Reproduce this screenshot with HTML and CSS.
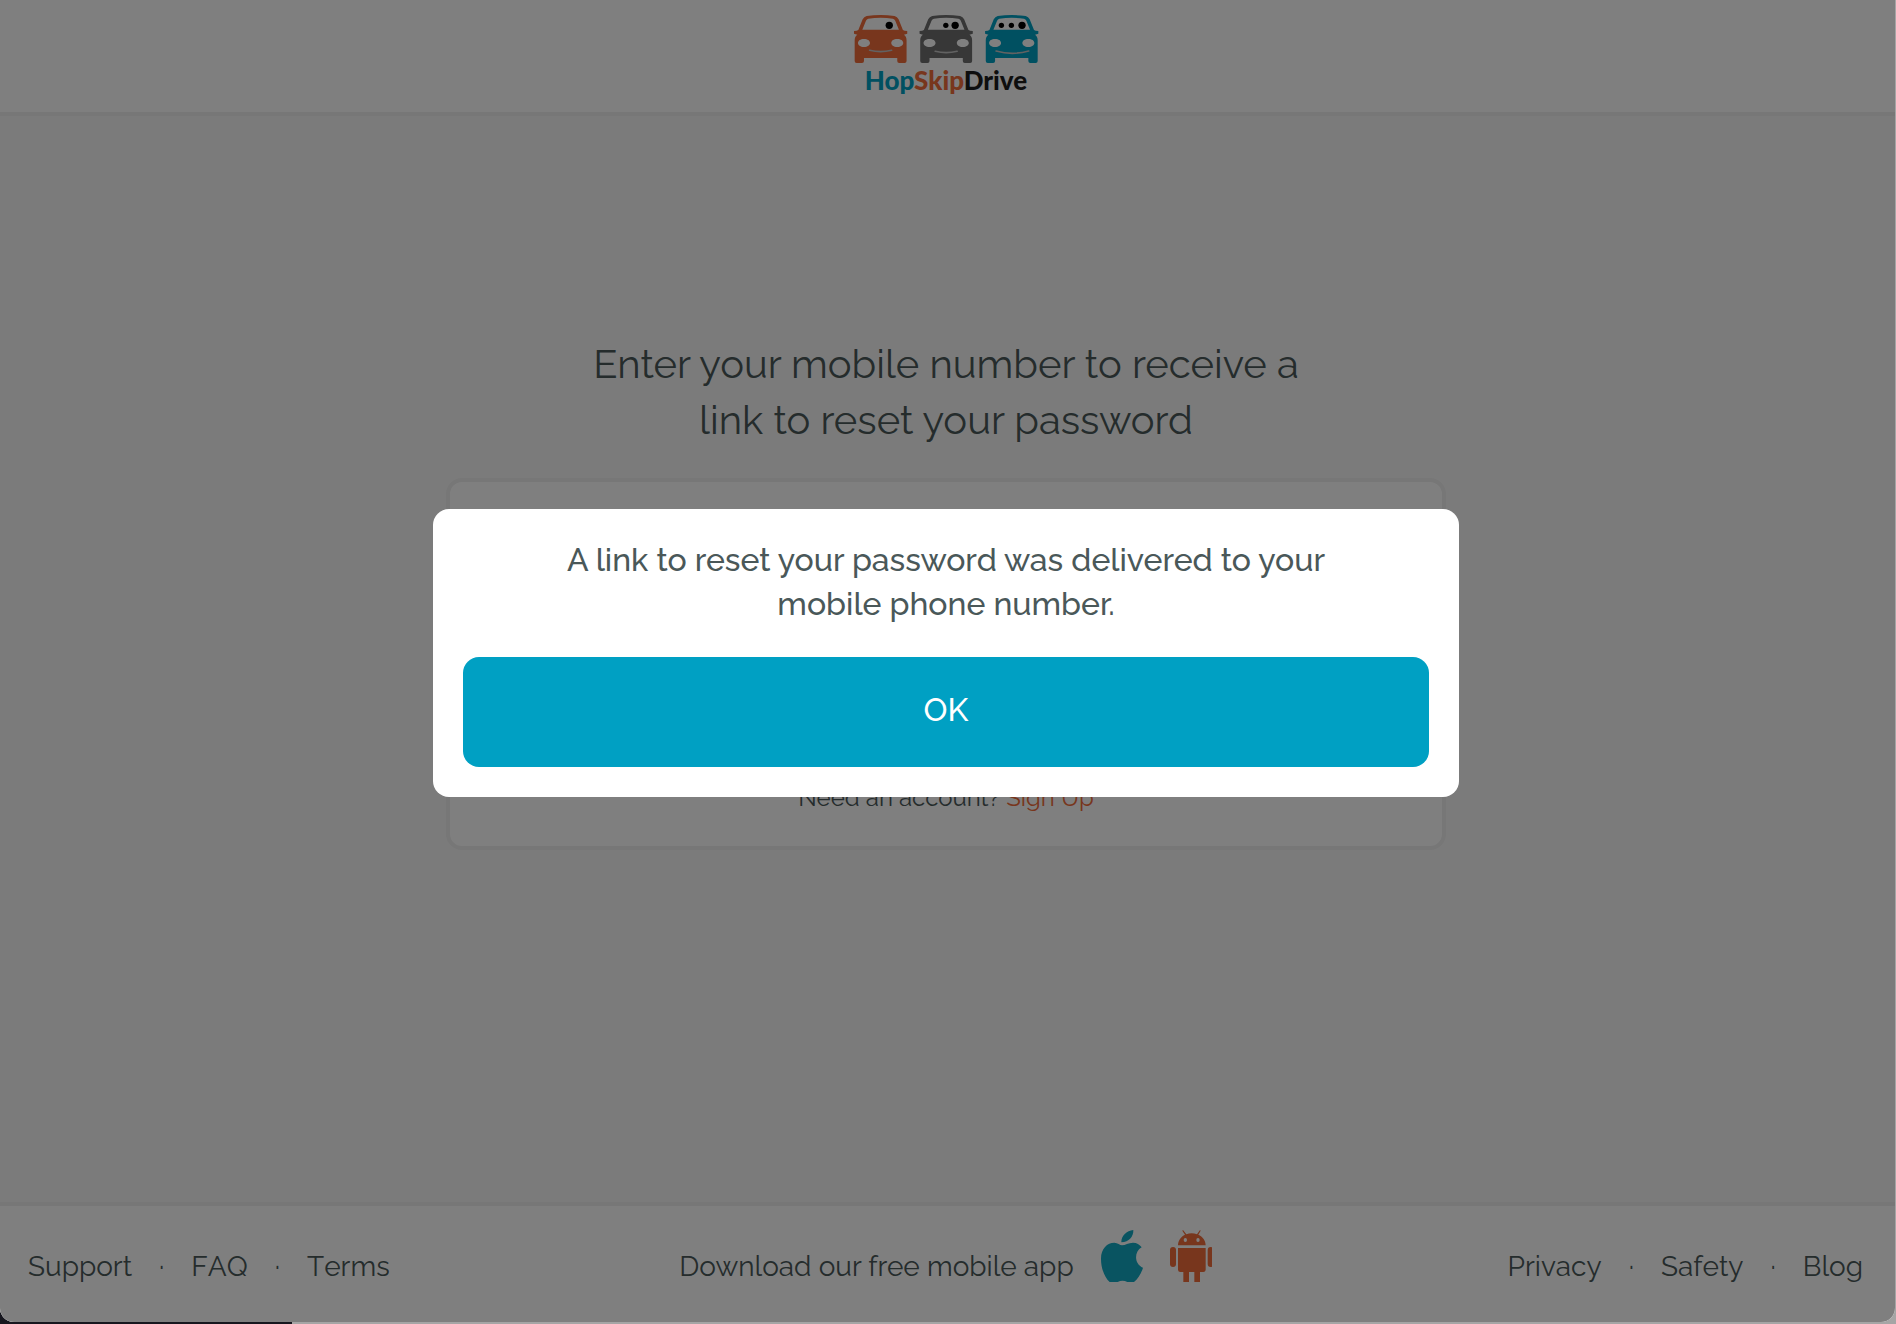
FILE: index.html
```html
<!DOCTYPE html>
<html lang="en">
<head>
	<meta charset="UTF-8">
	<title>HopSkipDrive</title>
	<link rel="stylesheet" href="styles.css">
</head>
<body>
	<div class="page">
		<header class="header">
			<a class="logo" href="#">
				<svg class="logo-cars" viewBox="0 0 556 144" aria-hidden="true">
					<defs>
						<g id="car">
							<path fill-rule="evenodd" d="M38 3Q80 -3 122 3Q130 5 134 13L147 45L152 47L160 48L160 56L150 59Q158 64 158 76V138Q158 144 152 144H136Q130 144 130 138V129H30V138Q30 144 24 144H8Q2 144 2 138V76Q2 64 10 59L0 56V48L8 47L13 45L26 13Q30 5 38 3ZM43 11Q38 12 36 17L25 44H135L124 17Q122 12 117 11Q80 6 43 11ZM30 72C19 72 12 77 12 84S19 96 30 96S48 91 48 84S41 72 30 72ZM130 72C119 72 112 77 112 84S119 96 130 96S148 91 148 84S141 72 130 72Z"/>
						</g>
					</defs>
					<g class="orange">
						<use href="#car"/>
						<path class="smile" d="M47 106Q80 114 113 106"/>
						<circle class="eye" cx="106" cy="31" r="11"/>
					</g>
					<g class="gray" transform="translate(197 0)">
						<use href="#car"/>
						<path class="smile" d="M47 109Q80 117 113 109"/>
						<circle class="eye" cx="79" cy="31" r="8"/>
						<circle class="eye" cx="107" cy="31" r="11"/>
					</g>
					<g class="blue" transform="translate(394 0)">
						<use href="#car"/>
						<path class="smile" d="M33 108Q82 122 131 108"/>
						<circle class="eye" cx="49" cy="31" r="8"/>
						<circle class="eye" cx="79" cy="31" r="8"/>
						<circle class="eye" cx="111" cy="31" r="11"/>
					</g>
				</svg>
				<span class="logo-name"><span class="hop">Hop</span><span class="skip">Skip</span>Drive</span>
			</a>
		</header>

		<main class="main">
			<h1 class="title">Enter your mobile number to receive a link to reset your password</h1>
			<div class="card">
				<p class="signup">Need an account? <a href="#">Sign Up</a></p>
			</div>
		</main>

		<footer class="footer">
			<nav class="footer-nav">
				<a href="#">Support</a><span>·</span><a href="#">FAQ</a><span>·</span><a href="#">Terms</a>
			</nav>
			<div class="footer-apps">
				<span>Download our free mobile app</span>
				<a class="app-icon" href="#" aria-label="iOS app">
					<svg class="apple" viewBox="0 0 126 156">
						<path d="M97 0C98 19 84 37 61 37C60 18 77 2 97 0Z"/>
						<path d="M63 46C73 46 82 38 96 38C107 38 116 43 122 52C99 65 99 101 126 113C121 130 111 147 99 156H79C69 151 60 151 50 156H26C10 142 0 114 0 86C0 55 19 38 40 38C50 38 57 46 63 46Z"/>
					</svg>
				</a>
				<a class="app-icon" href="#" aria-label="Android app">
					<svg class="orange" viewBox="0 0 126 156">
						<path fill-rule="evenodd" d="M24 46C24 32 33 20 45 14L37 2L39 0L49 13Q65 7 81 13L90 0L92 2L85 14C98 20 107 32 107 46ZM46 24A5 6 0 1 0 46 36A5 6 0 1 0 46 24ZM84 24A5 6 0 1 0 84 36A5 6 0 1 0 84 24Z"/>
						<path d="M24 54H107V119Q107 126 100 126H90V156H73V126H57V156H40V126H31Q24 126 24 119Z"/>
						<rect x="0" y="51" width="18" height="60" rx="9"/>
						<rect x="113" y="51" width="18" height="60" rx="9"/>
					</svg>
				</a>
			</div>
			<nav class="footer-nav footer-nav-right">
				<a href="#">Privacy</a><span>·</span><a href="#">Safety</a><span>·</span><a href="#">Blog</a>
			</nav>
		</footer>

		<!-- confirmation dialog -->
		<div class="overlay">
			<div class="modal" role="dialog" aria-modal="true" aria-labelledby="modalText">
				<p class="modal-text" id="modalText">A link to reset your password was delivered to your mobile phone number.</p>
				<button class="modal-ok" type="button">OK</button>
			</div>
		</div>
	</div>
</body>
</html>
```
FILE: styles.css
```css
* {
	box-sizing: border-box;
}
body {
	margin: 0;
	padding: 0 1px 2px 0;
	background: linear-gradient(to right, #17171f 292px, #a5a5a5 292px);
	font-family: Raleway, Lato, sans-serif;
	color: #4a5859;
}
a {
	color: inherit;
	text-decoration: none;
}

.page {
	position: relative;
	display: flex;
	flex-direction: column;
	min-height: calc(100vh - 2px);
	border-radius: 0 0 14px 14px;
	overflow: hidden;
	background: #f7f7f7;
}

/* header */
.header {
	display: flex;
	justify-content: center;
	height: 116px;
	padding: 15px 3px 0 0;
	background: #fff;
	border-bottom: 4px solid #eee;
}
.logo {
	display: flex;
	flex-direction: column;
	align-items: center;
}
.logo-cars {
	width: 185px;
	height: 48px;
}
.logo-name {
	font: 900 26px/34px Lato, sans-serif;
	color: #1c1c1c;
}
.orange {
	fill: #f06c3a;
}
.gray {
	fill: #6e6e6e;
}
.blue {
	fill: #00a0c3;
}
.apple {
	fill: #12a8c2;
}
.hop {
	color: #00a0c3;
}
.skip {
	color: #f06c3a;
}
.eye {
	fill: #000;
}
.smile {
	fill: none;
	stroke: #c4c4c4;
	stroke-width: 5;
	stroke-linecap: round;
}

/* content */
.main {
	flex: 1;
	display: flex;
	flex-direction: column;
	align-items: center;
	padding: 220px 3px 0 0;
}
.title {
	max-width: 760px;
	margin: 0 0 30px;
	font-size: 40px;
	font-weight: 400;
	line-height: 56px;
	text-align: center;
}
.card {
	display: flex;
	align-items: flex-end;
	justify-content: center;
	width: 100%;
	max-width: 1000px;
	min-height: 372px;
	padding: 30px;
	background: #fff;
	border: 4px solid #eee;
	border-radius: 16px;
}
.signup {
	margin: 0;
	font-size: 24px;
	line-height: 36px;
}
.signup a {
	color: #f06c3a;
}

/* footer */
.footer {
	display: grid;
	grid-template-columns: 1fr auto 1fr;
	align-items: center;
	height: 120px;
	padding: 6px 32px 0 28px;
	background: #fff;
	border-top: 4px solid #eee;
	font-size: 28px;
	line-height: 36px;
}
.footer-nav {
	display: flex;
	gap: 27px;
	font-kerning: none;
}
.footer-nav-right {
	justify-content: flex-end;
}
.footer-apps {
	display: flex;
	align-items: center;
	gap: 27px;
}
.app-icon {
	height: 52px;
	margin-bottom: 22px;
}
.app-icon svg {
	display: block;
	width: 42px;
	height: 52px;
}

/* dialog */
.overlay {
	position: absolute;
	top: 0;
	left: 0;
	width: 100%;
	height: 100%;
	display: flex;
	align-items: center;
	justify-content: center;
	padding: 0 3px 16px 0;
	background: rgba(0, 0, 0, 0.5);
}
.modal {
	width: 100%;
	max-width: 1026px;
	padding: 29px 30px 30px;
	background: #fff;
	border-radius: 16px;
	text-align: center;
}
.modal-text {
	max-width: 800px;
	margin: 0 auto 31px;
	font-size: 32px;
	font-weight: 500;
	line-height: 44px;
}
.modal-ok {
	display: block;
	width: 100%;
	height: 110px;
	padding: 0 0 5px;
	border: none;
	border-radius: 16px;
	background: #00a0c3;
	color: #fff;
	font-family: inherit;
	font-size: 32px;
	font-weight: 500;
	cursor: pointer;
}
```
